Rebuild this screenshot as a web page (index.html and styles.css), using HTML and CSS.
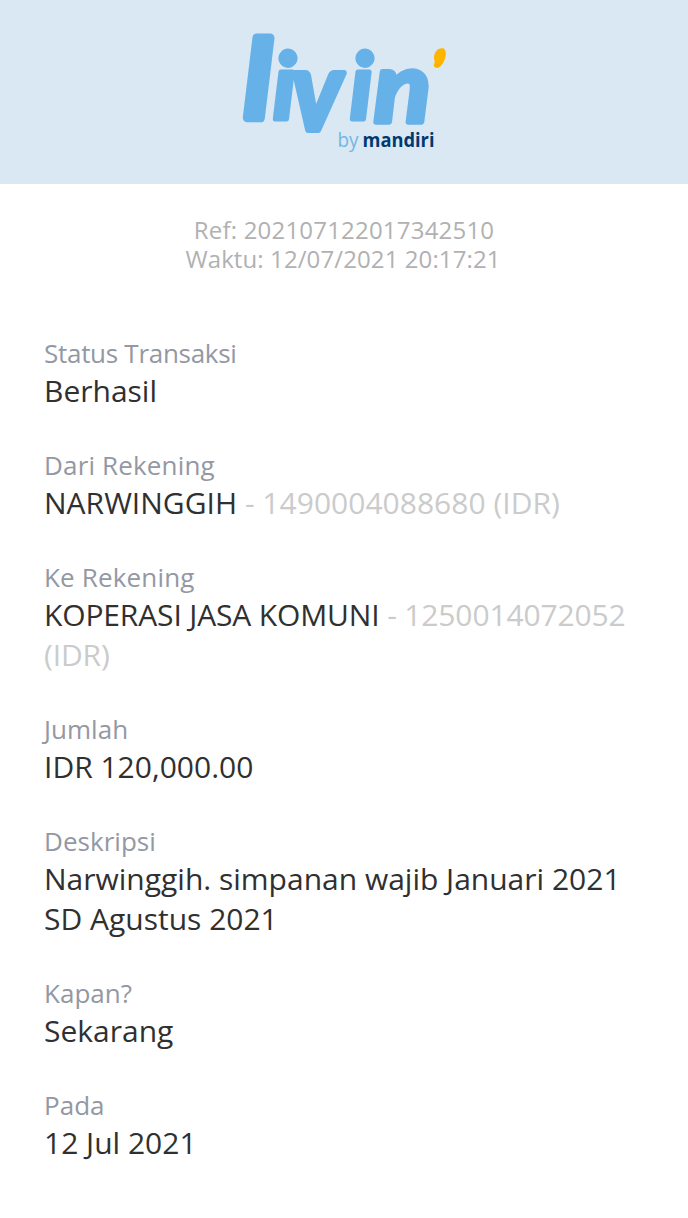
FILE: index.html
```html
<!DOCTYPE html>
<html lang="id">
<head>
<meta charset="utf-8">
<title>Livin' by Mandiri</title>
<link rel="stylesheet" href="styles.css">
</head>
<body>
<header class="banner">
  <svg class="logo" viewBox="236 26 216 132" role="img" aria-label="livin' by mandiri">
    <g class="wordmark">
      <text class="tall" transform="translate(245 118)">l</text>
      <text transform="translate(273 119)">i</text>
      <text transform="translate(292 130) scale(1.1 1.2)">v</text>
      <text transform="translate(350 119)">i</text>
      <text transform="translate(374 122) scale(1.14 1.06)">n</text>
    </g>
    <path class="accent" d="M434 58C434 50 440 47 444 48.500C448 52 445 64 439 67.500C435 69 432.500 66 434.500 63C435 61 434 60 434 58Z"/>
    <text class="by" x="337.500" y="146.500" textLength="21" lengthAdjust="spacingAndGlyphs">by</text>
    <text class="bank" x="362.500" y="147" textLength="72" lengthAdjust="spacingAndGlyphs">mandiri</text>
  </svg>
</header>
<main class="receipt">
  <div class="reference">
    <div class="ref">Ref: 202107122017342510</div>
    <div class="time">Waktu: 12/07/2021 20:17:21</div>
  </div>
  <dl class="details">
    <div class="item status"><dt>Status Transaksi</dt><dd>Berhasil</dd></div>
    <div class="item source"><dt>Dari Rekening</dt><dd>NARWINGGIH <span class="account">- 1490004088680 (IDR)</span></dd></div>
    <div class="item target"><dt>Ke Rekening</dt><dd>KOPERASI JASA KOMUNI <span class="account">- 1250014072052 (IDR)</span></dd></div>
    <div class="item"><dt>Jumlah</dt><dd>IDR 120,000.00</dd></div>
    <div class="item"><dt>Deskripsi</dt><dd>Narwinggih. simpanan wajib Januari 2021 SD Agustus 2021</dd></div>
    <div class="item"><dt>Kapan?</dt><dd>Sekarang</dd></div>
    <div class="item"><dt>Pada</dt><dd>12 Jul 2021</dd></div>
  </dl>
</main>
</body>
</html>
```
FILE: styles.css
```css
* { box-sizing: border-box; }
body { margin: 0; background: #fff; font-family: "Open Sans", sans-serif; }
.banner { height: 184px; padding: 26px 0 0 236px; background: #dae8f3; }
.logo { display: block; width: 216px; height: 132px; overflow: visible; }
.wordmark { font: italic 700 92px Lato, sans-serif; fill: #66b2e8; stroke: #66b2e8; stroke-width: 5px; stroke-linejoin: round; }
.tall { font-size: 107px; stroke-width: 9px; }
.accent { fill: #ffb400; }
.by { font: 400 20px "Open Sans", sans-serif; fill: #73b6e6; }
.bank { font: 700 19px "Open Sans", sans-serif; fill: #003a70; }
.receipt { padding: 31px 44px 0; }
.reference { text-align: center; font-size: 24px; line-height: 29px; color: #b1b1b1; }
.ref { letter-spacing: .2px; }
.time { letter-spacing: .1px; padding-right: 2px; }
.details { margin: 62px 0 0; display: flex; flex-direction: column; gap: 36px; }
dt { font-size: 26px; line-height: 36px; color: #9398a3; letter-spacing: .03px; }
dd { margin: 0; font-size: 30px; line-height: 40px; color: #303030; }
.status dt { letter-spacing: -.28px; }
.source dt, .target dt { letter-spacing: .16px; }
.source dd { letter-spacing: .02px; }
.target dd { letter-spacing: -.14px; }
.account { color: #cbcbcb; }
```
